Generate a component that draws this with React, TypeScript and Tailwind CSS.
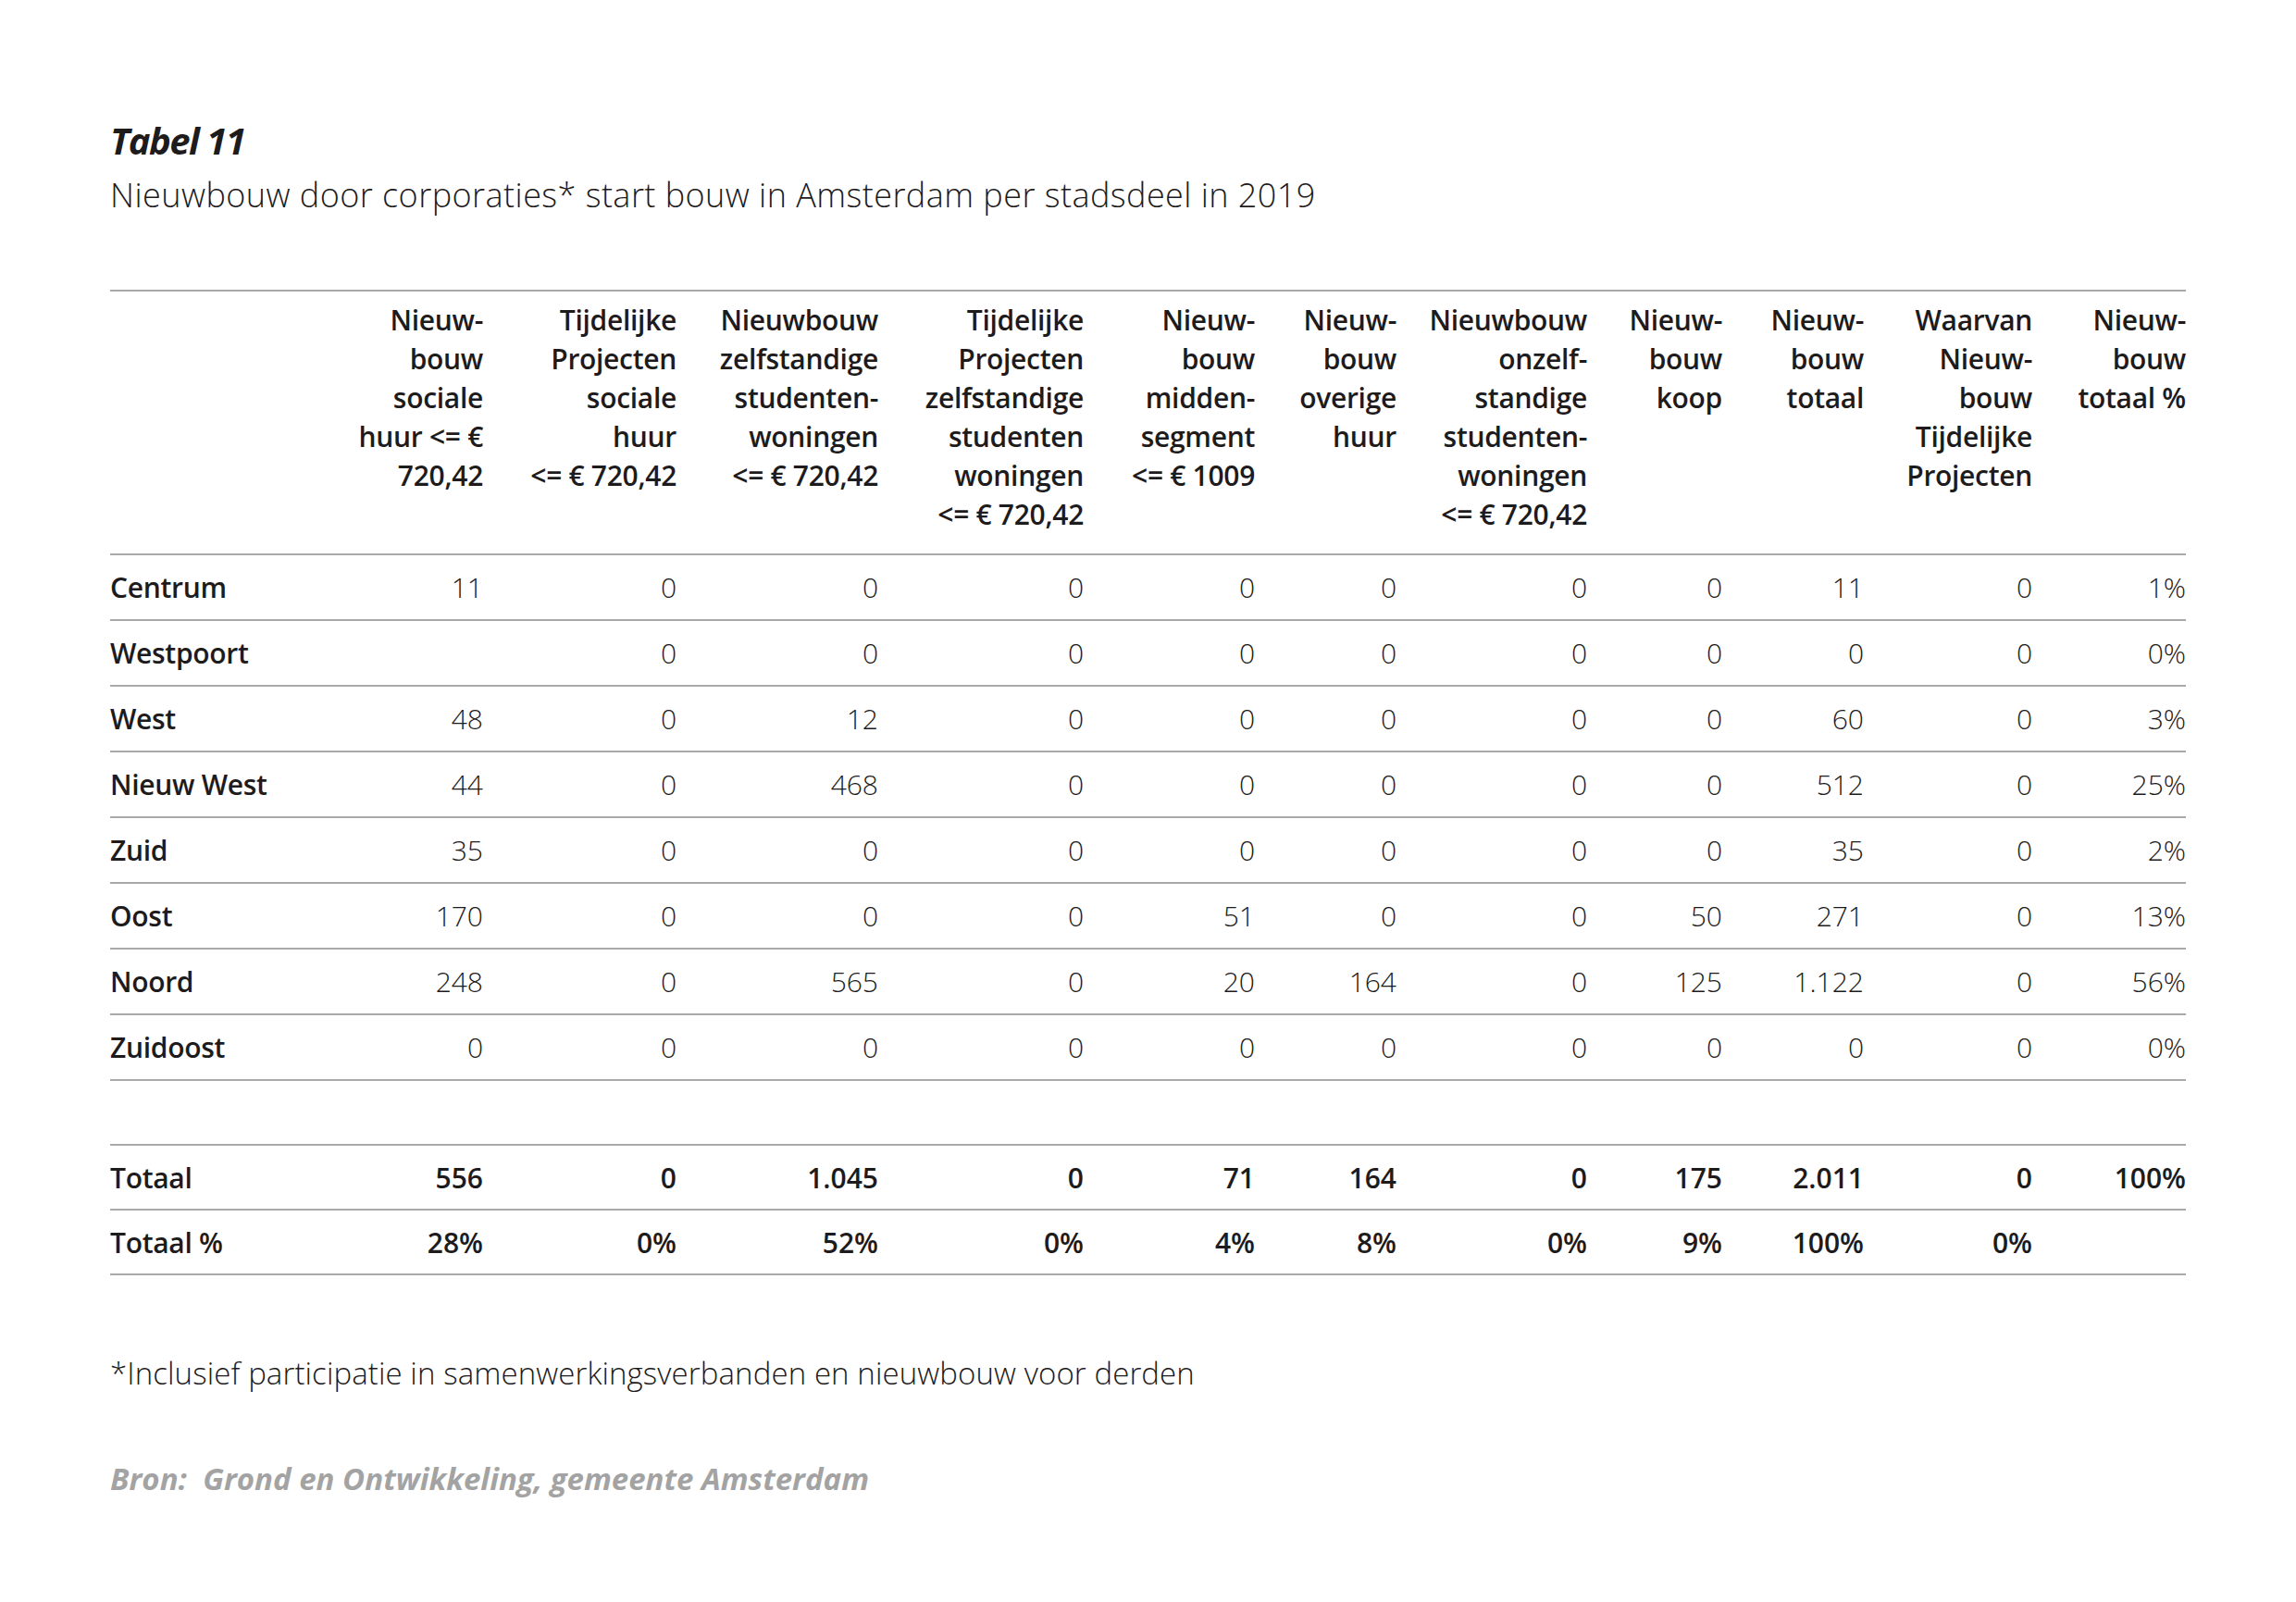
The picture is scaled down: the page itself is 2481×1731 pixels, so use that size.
const headers: string[][] = [
  ["Nieuw-", "bouw", "sociale", "huur <= €", "720,42"],
  ["Tijdelijke", "Projecten", "sociale", "huur", "<= € 720,42"],
  ["Nieuwbouw", "zelfstandige", "studenten-", "woningen", "<= € 720,42"],
  ["Tijdelijke", "Projecten", "zelfstandige", "studenten", "woningen", "<= € 720,42"],
  ["Nieuw-", "bouw", "midden-", "segment", "<= € 1009"],
  ["Nieuw-", "bouw", "overige", "huur"],
  ["Nieuwbouw", "onzelf-", "standige", "studenten-", "woningen", "<= € 720,42"],
  ["Nieuw-", "bouw", "koop"],
  ["Nieuw-", "bouw", "totaal"],
  ["Waarvan", "Nieuw-", "bouw", "Tijdelijke", "Projecten"],
  ["Nieuw-", "bouw", "totaal %"],
];

const rows: { name: string; values: string[] }[] = [
  { name: "Centrum", values: ["11", "0", "0", "0", "0", "0", "0", "0", "11", "0", "1%"] },
  { name: "Westpoort", values: ["", "0", "0", "0", "0", "0", "0", "0", "0", "0", "0%"] },
  { name: "West", values: ["48", "0", "12", "0", "0", "0", "0", "0", "60", "0", "3%"] },
  { name: "Nieuw West", values: ["44", "0", "468", "0", "0", "0", "0", "0", "512", "0", "25%"] },
  { name: "Zuid", values: ["35", "0", "0", "0", "0", "0", "0", "0", "35", "0", "2%"] },
  { name: "Oost", values: ["170", "0", "0", "0", "51", "0", "0", "50", "271", "0", "13%"] },
  { name: "Noord", values: ["248", "0", "565", "0", "20", "164", "0", "125", "1.122", "0", "56%"] },
  { name: "Zuidoost", values: ["0", "0", "0", "0", "0", "0", "0", "0", "0", "0", "0%"] },
];

const totals: { name: string; values: string[] }[] = [
  { name: "Totaal", values: ["556", "0", "1.045", "0", "71", "164", "0", "175", "2.011", "0", "100%"] },
  { name: "Totaal %", values: ["28%", "0%", "52%", "0%", "4%", "8%", "0%", "9%", "100%", "0%", ""] },
];

const cols =
  "grid grid-cols-[200px_203px_209px_218px_222px_185px_153px_206px_146px_153px_182px_166px]";

const Row = ({ name, values, bold }: { name: string; values: string[]; bold?: boolean }) => (
  <div
    className={`${cols} ${bold ? "h-[70px]" : "h-[71px]"} items-center border-b-2 border-[#a9a9a9] text-[30px]`}
  >
    <div className="font-semibold tracking-[-0.3px]">{name}</div>
    {values.map((v, i) => (
      <div key={i} className={`text-right ${bold ? "font-semibold" : "font-light"}`}>
        {v}
      </div>
    ))}
  </div>
);

export default function App() {
  return (
    <div className="w-[2481px] h-[1731px] bg-white pl-[119px] pt-[128px] text-[#1d1b1c] font-['Open_Sans',sans-serif]">
      <h1 className="text-[40px] leading-[48px] font-bold italic tracking-[-1.5px]">Tabel 11</h1>
      <p className="mt-[15px] text-[36px] leading-[40px] font-light tracking-[0.45px]">
        Nieuwbouw door corporaties* start bouw in Amsterdam per stadsdeel in 2019
      </p>

      <div className="mt-[82px] w-[2243px]">
        <div className={`${cols} h-[287px] border-y-2 border-[#a9a9a9] pt-[10px]`}>
          <div />
          {headers.map((lines, i) => (
            <div key={i} className="text-right text-[30px] leading-[42px] font-semibold whitespace-nowrap tracking-[-0.3px]">
              {lines.map((l, j) => (
                <div key={j}>{l}</div>
              ))}
            </div>
          ))}
        </div>
        {rows.map((r) => (
          <Row key={r.name} name={r.name} values={r.values} />
        ))}
        <div className="h-[70px] border-b-2 border-[#a9a9a9]" />
        {totals.map((r) => (
          <Row key={r.name} name={r.name} values={r.values} bold />
        ))}
      </div>

      <p className="mt-[86px] text-[33px] leading-[40px] font-light tracking-[0.1px]">
        *Inclusief participatie in samenwerkingsverbanden en nieuwbouw voor derden
      </p>
      <p className="mt-[74px] text-[33px] leading-[40px] font-bold italic text-[#a3a3a3] whitespace-pre">
        {"Bron:  Grond en Ontwikkeling, gemeente Amsterdam"}
      </p>
    </div>
  );
}
